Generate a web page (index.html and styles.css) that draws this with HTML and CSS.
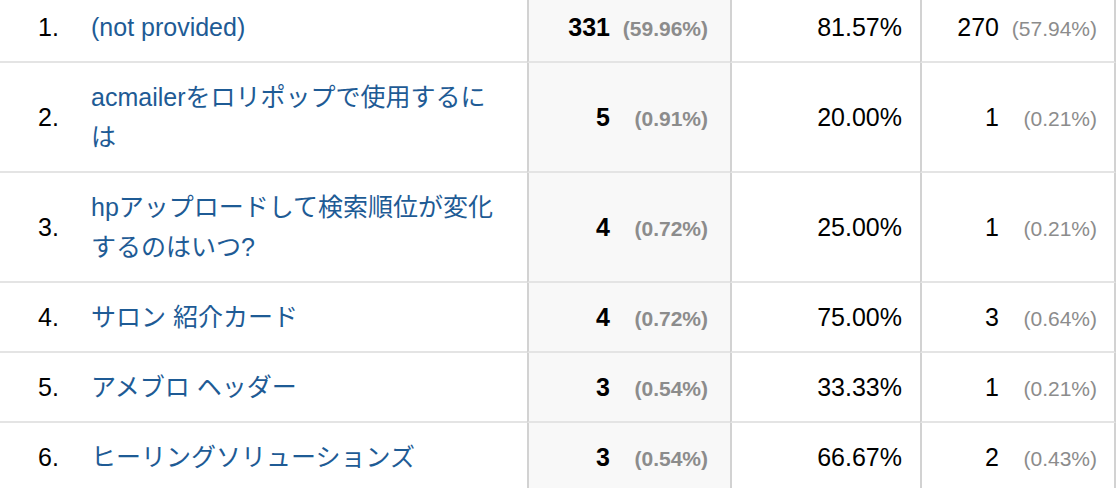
FILE: index.html
```html
<!DOCTYPE html>
<html lang="ja">
<head>
    <meta charset="UTF-8">
    <meta name="viewport" content="width=device-width, initial-scale=1.0">
    <title>Keyword Report</title>
    <link rel="stylesheet" href="styles.css">
</head>
<body>

    <table class="report">
        <tbody>
            <tr>
                <td class="rank">1.</td>
                <td class="keyword"><a href="#">(not provided)</a></td>
                <td class="num sessions"><span class="val">331</span><span class="pct">(59.96%)</span></td>
                <td class="num rate">81.57%</td>
                <td class="num users"><span class="val">270</span><span class="pct">(57.94%)</span></td>
            </tr>
            <tr>
                <td class="rank">2.</td>
                <td class="keyword"><a href="#">acmailerをロリポップで使用するには</a></td>
                <td class="num sessions"><span class="val">5</span><span class="pct">(0.91%)</span></td>
                <td class="num rate">20.00%</td>
                <td class="num users"><span class="val">1</span><span class="pct">(0.21%)</span></td>
            </tr>
            <tr>
                <td class="rank">3.</td>
                <td class="keyword"><a href="#">hpアップロードして検索順位が変化するのはいつ?</a></td>
                <td class="num sessions"><span class="val">4</span><span class="pct">(0.72%)</span></td>
                <td class="num rate">25.00%</td>
                <td class="num users"><span class="val">1</span><span class="pct">(0.21%)</span></td>
            </tr>
            <tr>
                <td class="rank">4.</td>
                <td class="keyword"><a href="#">サロン 紹介カード</a></td>
                <td class="num sessions"><span class="val">4</span><span class="pct">(0.72%)</span></td>
                <td class="num rate">75.00%</td>
                <td class="num users"><span class="val">3</span><span class="pct">(0.64%)</span></td>
            </tr>
            <tr>
                <td class="rank">5.</td>
                <td class="keyword"><a href="#">アメブロ ヘッダー</a></td>
                <td class="num sessions"><span class="val">3</span><span class="pct">(0.54%)</span></td>
                <td class="num rate">33.33%</td>
                <td class="num users"><span class="val">1</span><span class="pct">(0.21%)</span></td>
            </tr>
            <tr>
                <td class="rank">6.</td>
                <td class="keyword"><a href="#">ヒーリングソリューションズ</a></td>
                <td class="num sessions"><span class="val">3</span><span class="pct">(0.54%)</span></td>
                <td class="num rate">66.67%</td>
                <td class="num users"><span class="val">2</span><span class="pct">(0.43%)</span></td>
            </tr>
        </tbody>
    </table>

</body>
</html>
```

FILE: styles.css
```css
* {
    margin: 0;
    padding: 0;
    box-sizing: border-box;
}

body {
    font-family: 'Liberation Sans', 'Noto Sans CJK JP', sans-serif;
    font-size: 25px;
    color: #000;
    background-color: #fff;
    overflow: hidden;
}

/* Report table */
.report {
    width: 1116px;
    margin-top: -7px;
    table-layout: fixed;
    border-collapse: separate;
    border-spacing: 0;
}

.report td {
    padding: 14px 0;
    line-height: 40px;
    vertical-align: middle;
    border-bottom: 2px solid #e4e4e4;
}

.report .rank {
    width: 91px;
    padding-left: 38px;
}

.report .keyword {
    width: 436px;
    padding-right: 26px;
}

.report .keyword a {
    color: #1e5b95;
    text-decoration: none;
}

/* Number columns */
.report .num {
    text-align: right;
    white-space: nowrap;
    border-left: 2px solid #d2d2d2;
}

.report .sessions {
    width: 203px;
    padding-right: 22px;
    background-color: #f8f8f8;
}

.report .sessions .val {
    font-weight: bold;
}

.report .rate {
    width: 190px;
    padding-right: 18px;
}

.report .users {
    width: 196px;
    padding-right: 17px;
    border-right: 2px solid #d2d2d2;
}

.pct {
    display: inline-block;
    width: 98px;
    font-size: 21px;
    line-height: 20px;
    color: #8c8c8c;
    text-align: right;
}

.sessions .pct {
    font-weight: bold;
}
```
